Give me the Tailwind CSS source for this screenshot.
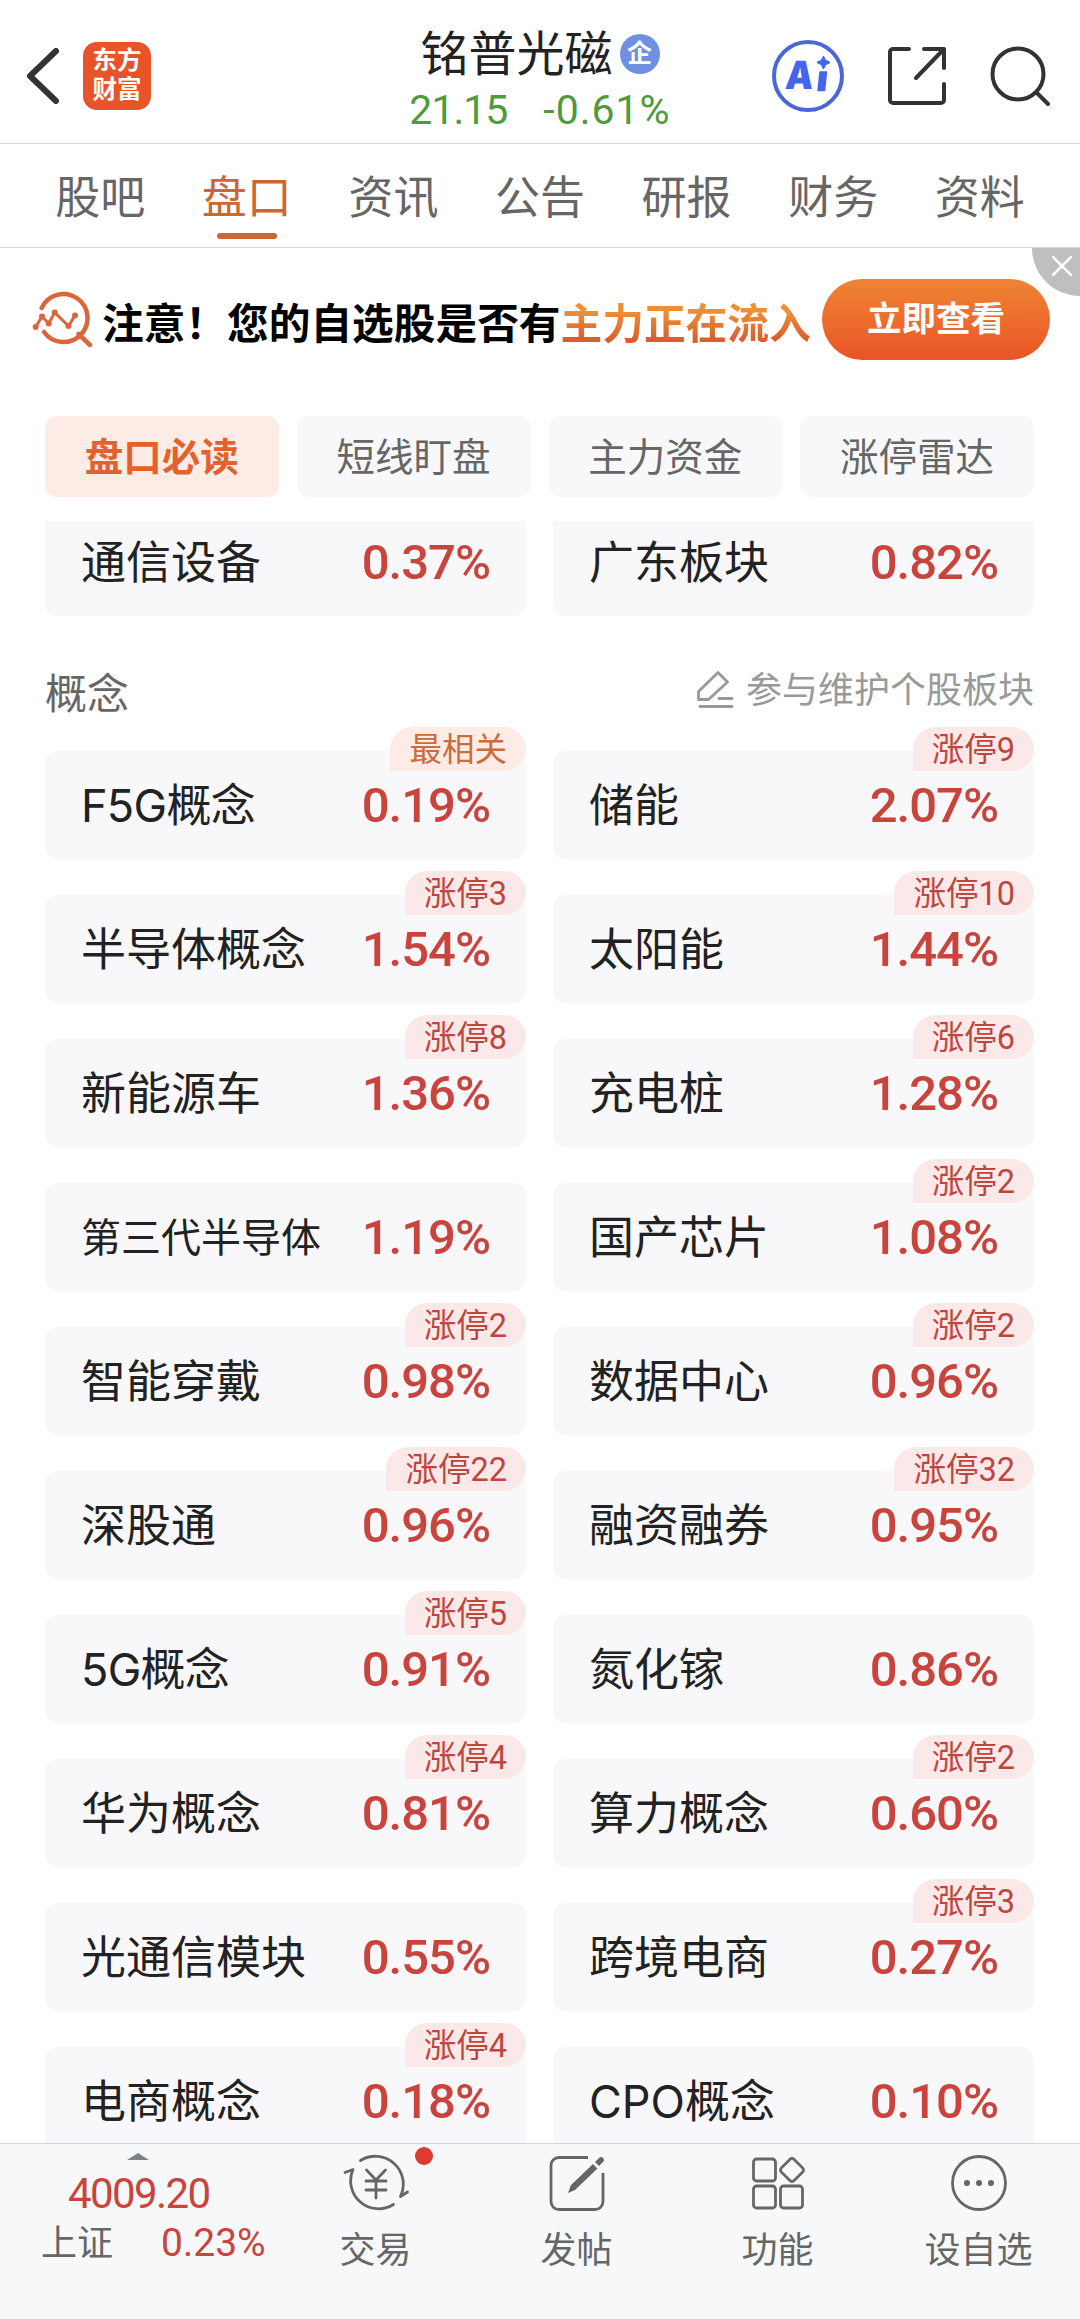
<!DOCTYPE html>
<html lang="zh-CN">
<head>
    <meta charset="UTF-8">
    <meta name="viewport" content="width=device-width, initial-scale=1.0">
    <title>铭普光磁 - 盘口</title>
    <script src="https://cdn.jsdelivr.net/npm/@tailwindcss/browser@4"></script>
    <style>
        body {
            font-family: 'Inter', 'Noto Sans CJK SC', sans-serif;
        }
        .num {
            font-family: 'Roboto', 'Noto Sans CJK SC', sans-serif;
        }
    </style>
</head>
<body class="bg-white text-[#222]">
    <div class="w-[1080px] h-[2319px] flex flex-col overflow-hidden whitespace-nowrap">

        <!-- Header -->
        <header class="h-[144px] shrink-0 border-b border-[#d8d8d8] grid grid-cols-[1fr_270px_1fr] items-center">
            <div class="flex items-center gap-[24px] pl-[26px] pt-[9px]">
                <svg class="w-[33px] h-[56px]" viewBox="0 0 33 56" fill="none" stroke="#333" stroke-width="6" stroke-linecap="round" stroke-linejoin="round"><path d="M30 3 4 28 30 53"/></svg>
                <div class="w-[68px] h-[68px] rounded-[14px] bg-[#e8532a] text-white font-bold text-[24.500px] leading-[29px] pb-[2px] flex flex-col items-center justify-center">
                    <span>东方</span>
                    <span>财富</span>
                </div>
            </div>
            <div class="flex flex-col items-center">
                <div class="flex items-center gap-[7px] h-[56px] mt-[17px]">
                    <h1 class="text-[48px] leading-[56px] font-normal">铭普光磁</h1>
                    <span class="w-[40px] h-[40px] rounded-full bg-[#6f8fe0] text-white text-[25px] leading-[38px] font-bold text-center">企</span>
                </div>
                <div class="num flex gap-[36px] mt-[3px] text-[41px] leading-[50px] text-[#4e9a3d]">
                    <span class="tracking-[-1px]">21.15</span>
                    <span class="tracking-[1px]">-0.61%</span>
                </div>
            </div>
            <div class="flex items-center justify-end pr-[28px] pt-[9px]">
                <svg class="w-[74px] h-[74px] mr-[42px]" viewBox="0 0 74 74">
                    <circle cx="37" cy="37" r="34" fill="none" stroke="#4a66d8" stroke-width="4"/>
                    <text x="18" y="50" font-size="39" font-weight="900" font-family="Inter" fill="#4465f0" textLength="28" lengthAdjust="spacingAndGlyphs" transform="skewX(-5)">A</text>
                    <path d="M49 33h6.500l-2 18.500H47zM52.500 17.500l2 4 4 2-4 2-2 4-2-4-4-2 4-2z" fill="#4465f0" stroke="#4465f0" stroke-width="1.500" stroke-linejoin="round"/>
                </svg>
                <svg class="w-[60px] h-[60px] mr-[43px]" viewBox="0 0 60 60" fill="none" stroke="#333" stroke-width="4" stroke-linecap="round" stroke-linejoin="round"><path d="M22 3H6a3 3 0 0 0-3 3v48a3 3 0 0 0 3 3h48a3 3 0 0 0 3-3V38M37 3h20v19M56 4 29 32"/></svg>
                <svg class="w-[62px] h-[62px]" viewBox="0 0 62 62" fill="none" stroke="#333" stroke-width="4" stroke-linecap="round"><circle cx="28" cy="29" r="25.500"/><path d="m47 48 11 11"/></svg>
            </div>
        </header>

        <!-- Tabs -->
        <nav class="h-[104px] shrink-0 border-b border-[#d8d8d8] px-[27px] grid grid-cols-7 text-[45px] leading-[60px] text-[#666] text-center">
            <div class="pt-[24px]">股吧</div>
            <div class="pt-[24px] text-[#cc6633] flex flex-col items-center">盘口<span class="w-[60px] h-[6px] mt-[5px] rounded-full bg-[#cc6633]"></span></div>
            <div class="pt-[24px]">资讯</div>
            <div class="pt-[24px]">公告</div>
            <div class="pt-[24px]">研报</div>
            <div class="pt-[24px]">财务</div>
            <div class="pt-[24px]">资料</div>
        </nav>

        <!-- Banner -->
        <section class="relative h-[168px] shrink-0 flex pl-[32px] pt-[31px]">
            <svg class="w-[62px] h-[60px] mt-[11px]" viewBox="0 0 62 60" fill="none" stroke="#d9673a" stroke-width="4.500" stroke-linecap="round" stroke-linejoin="round">
                <path d="M9.700 18A24 24 0 1 1 12 42M46.500 44 58 55"/>
                <path d="M3.700 37 10 26.500l6.700 7 6-11L36.500 36 43 25.500" stroke-width="3"/>
                <path d="M3.700 37h0M10 26.500h0M16.700 33.500h0M22.700 22.500h0M36.500 36h0M43 25.500h0" stroke-width="6"/>
            </svg>
            <p class="w-[711px] ml-[8px] mt-[15px] text-[41.700px] leading-[60px] font-bold text-black">注意！您的自选股是否有<span class="bg-linear-to-b from-[#eb9038] from-25% to-[#dc5d2c] to-80% bg-clip-text text-transparent">主力正在流入</span></p>
            <button class="ml-[9px] w-[228px] h-[81px] rounded-full bg-linear-to-b from-[#ef8433] to-[#ea5326] text-white text-[34.500px] font-bold leading-[79px] pb-[2px]">立即查看</button>
            <div class="absolute right-0 top-0 w-[48px] h-[48px] rounded-bl-full bg-[#bfbfbf]">
                <svg class="ml-[20px] mt-[8px] w-[20px] h-[20px]" viewBox="0 0 20 20" stroke="#fff" stroke-width="2.500"><path d="m0 0 20 20M20 0 0 20"/></svg>
            </div>
        </section>

        <!-- Filter pills -->
        <div class="shrink-0 pl-[45px] pr-[46px] grid grid-cols-4 gap-[18px] text-[38.500px] leading-[83px] text-center text-[#666]">
            <div class="h-[81px] rounded-[12px] bg-[#fcece5] text-[#e2622f] font-bold">盘口必读</div>
            <div class="h-[81px] rounded-[12px] bg-[#f8f8fa]">短线盯盘</div>
            <div class="h-[81px] rounded-[12px] bg-[#f8f8fa]">主力资金</div>
            <div class="h-[81px] rounded-[12px] bg-[#f8f8fa]">涨停雷达</div>
        </div>

        <!-- Scrolling list -->
        <main class="mt-[24px] h-[1622px] shrink-0 pl-[45px] pr-[46px] overflow-hidden">
            <div id="sector-grid" class="-mt-[13px] grid grid-cols-2 gap-x-[27px]"></div>
            <div class="h-[135px] flex justify-between text-[#666]">
                <h2 class="mt-[49px] text-[42px] leading-[58px]">概念</h2>
                <div class="mt-[44px] flex items-center gap-[12px] h-[60px] text-[36px] text-[#999]">
                    <svg class="w-[38px] h-[38px]" viewBox="0 0 38 38" fill="none" stroke="#999" stroke-width="2.800" stroke-linecap="round" stroke-linejoin="round"><path d="M2.500 20.500 22 1.500l9.500 9.500-19 17.500h-10zM23 27.500h13M4 35.500h32"/></svg>
                    <span>参与维护个股板块</span>
                </div>
            </div>
            <div id="concept-grid" class="grid grid-cols-2 gap-x-[27px] gap-y-[36px]"></div>
        </main>

        <!-- Bottom bar -->
        <footer class="flex-1 border-t border-[#d2d5d9] bg-[#f7f8fa] flex text-[#666] text-[36px]">
            <div class="w-[275px] shrink-0">
                <svg class="ml-[127px] mt-[9px] w-[22px] h-[7px]" viewBox="0 0 22 7"><path d="M0 7 11 0l11 7z" fill="#808085"/></svg>
                <div class="num ml-[68px] mt-[7px] text-[42px] leading-[54px] tracking-[-1.600px] text-[#c9443c]">4009.20</div>
                <div class="flex items-center ml-[41px] -mt-[5px] h-[54px]">
                    <span>上证</span>
                    <span class="num ml-[48px] text-[39px] text-[#c9443c]">0.23%</span>
                </div>
            </div>
            <div class="relative w-[201px] flex flex-col items-center pt-[9px]">
                <svg class="w-[66px] h-[60px]" viewBox="0 0 66 60" fill="none" stroke="#666" stroke-width="2.800" stroke-linecap="round" stroke-linejoin="round">
                    <path d="M17.500 7.500A28 28 0 0 1 57.500 43.500l7-4.500M50.500 51.500A28 28 0 0 1 10 16.500l-8 3"/>
                    <path d="m23.500 17 9.500 10 9.500-10M33 27v18M23 28h20M23 37h20"/>
                </svg>
                <span class="absolute left-[140px] top-[3px] w-[18px] h-[18px] rounded-full bg-[#dc3a32]"></span>
                <span class="mt-[10px] leading-[54px]">交易</span>
            </div>
            <div class="w-[201px] flex flex-col items-center pt-[9px]">
                <svg class="w-[60px] h-[60px]" viewBox="0 0 60 60" fill="none" stroke="#666" stroke-width="2.800" stroke-linejoin="round">
                    <path d="M41 4.500H12a8 8 0 0 0-8 8v36a8 8 0 0 0 8 8h36a8 8 0 0 0 8-8V20"/>
                    <path d="m21 40 3-8 22-21 4.500 4.500L28 37zM48 9l4-4a2.800 2.800 0 0 1 4 4l-4 4z" fill="#666" stroke="none"/>
                </svg>
                <span class="mt-[10px] leading-[54px]">发帖</span>
            </div>
            <div class="w-[201px] flex flex-col items-center pt-[9px]">
                <svg class="w-[60px] h-[60px]" viewBox="0 0 60 60" fill="none" stroke="#666" stroke-width="2.800" stroke-linejoin="round">
                    <rect x="5.500" y="6" width="22" height="22" rx="3"/>
                    <rect x="5.500" y="33" width="22" height="22" rx="3"/>
                    <rect x="32.500" y="33" width="22" height="22" rx="3"/>
                    <rect x="35" y="8" width="18" height="18" rx="3" transform="rotate(45 44 17)"/>
                </svg>
                <span class="mt-[10px] leading-[54px]">功能</span>
            </div>
            <div class="w-[201px] flex flex-col items-center pt-[9px]">
                <svg class="w-[60px] h-[60px]" viewBox="0 0 60 60" fill="none" stroke="#666" stroke-width="2.800">
                    <circle cx="30" cy="30" r="26.500"/>
                    <path d="M18 30h0M30 30h0M42 30h0" stroke-width="6" stroke-linecap="round"/>
                </svg>
                <span class="mt-[10px] leading-[54px]">设自选</span>
            </div>
        </footer>
    </div>

    <script>
        const sectors = [
            ['通信设备', '0.37%'], ['广东板块', '0.82%'],
        ];

        const concepts = [
            ['F5G概念', '0.19%', '最相关'], ['储能', '2.07%', '涨停9'],
            ['半导体概念', '1.54%', '涨停3'], ['太阳能', '1.44%', '涨停10'],
            ['新能源车', '1.36%', '涨停8'], ['充电桩', '1.28%', '涨停6'],
            ['第三代半导体', '1.19%'], ['国产芯片', '1.08%', '涨停2'],
            ['智能穿戴', '0.98%', '涨停2'], ['数据中心', '0.96%', '涨停2'],
            ['深股通', '0.96%', '涨停22'], ['融资融券', '0.95%', '涨停32'],
            ['5G概念', '0.91%', '涨停5'], ['氮化镓', '0.86%'],
            ['华为概念', '0.81%', '涨停4'], ['算力概念', '0.60%', '涨停2'],
            ['光通信模块', '0.55%'], ['跨境电商', '0.27%', '涨停3'],
            ['电商概念', '0.18%', '涨停4'], ['CPO概念', '0.10%'],
        ];

        function createCard([name, change, tag]) {
            // Six-character names are set smaller to leave room for the value
            let nameSize = name.length > 5 ? 'text-[40px]' : 'text-[45px]';
            if (name.includes('5G')) nameSize += ' tracking-[-0.700px]';
            const tagColor = tag === '最相关' ? 'bg-[#fcece5] text-[#cc6b3d]' : 'bg-[#fae9e8] text-[#c0453e]';
            const tagHtml = tag
                ? `<span class="num absolute right-0 -top-[24px] h-[44px] px-[19px] rounded-t-[22px] rounded-br-[22px] text-[32.500px] leading-[46px] ${tagColor}">${tag}</span>`
                : '';
            return `
                <div class="relative h-[108px] rounded-[12px] bg-[#f8f8fa] pl-[36px] pr-[36px] pt-[2px] flex items-center justify-between">
                    <span class="${nameSize}">${name}</span>
                    <span class="num text-[49px] font-medium tracking-[-1px] text-[#c9443c]">${change}</span>
                    ${tagHtml}
                </div>
            `;
        }

        document.getElementById('sector-grid').innerHTML = sectors.map(createCard).join('');
        document.getElementById('concept-grid').innerHTML = concepts.map(createCard).join('');
    </script>
</body>
</html>
